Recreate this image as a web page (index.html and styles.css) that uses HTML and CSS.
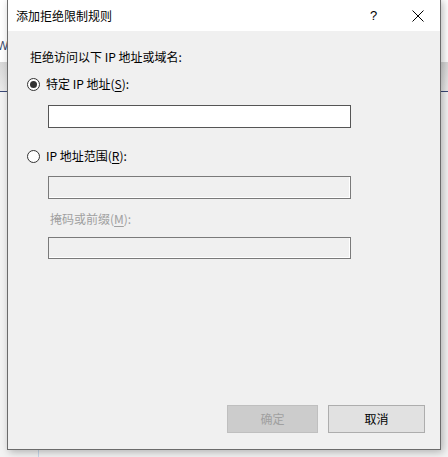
FILE: index.html
```html
<!DOCTYPE html>
<html lang="zh-CN">
<head>
<meta charset="utf-8">
<title>添加拒绝限制规则</title>
<link rel="stylesheet" href="styles.css">
</head>
<body>
<div class="desktop">
  <div class="bg-top"><span class="bg-w">W</span></div>
  <div class="bg-tab"></div>
  <div class="bg-line"></div>
  <div class="bg-rest"></div>
  <div class="bg-blue"></div>
</div>
<div class="dialog">
  <div class="titlebar">
    <span class="title">添加拒绝限制规则</span>
    <span class="help">?</span>
    <span class="close">
      <svg width="12" height="12" viewBox="0 0 12 12"><path d="M0.5 0.5 L11.5 11.5 M11.5 0.5 L0.5 11.5" stroke="#000" stroke-width="1" fill="none"/></svg>
    </span>
  </div>
  <div class="content">
    <div class="intro">拒绝访问以下 IP 地址或域名:</div>
    <div class="radio-row first">
      <span class="radio checked"></span>
      <span class="radio-label">特定 IP 地址(<u>S</u>):</span>
    </div>
    <div class="field"></div>
    <div class="radio-row second">
      <span class="radio"></span>
      <span class="radio-label">IP 地址范围(<u>R</u>):</span>
    </div>
    <div class="field disabled"></div>
    <div class="sublabel">掩码或前缀(<u>M</u>):</div>
    <div class="field disabled last"></div>
    <div class="buttons">
      <div class="btn btn-disabled">确定</div>
      <div class="btn btn-cancel">取消</div>
    </div>
  </div>
</div>
</body>
</html>
```

FILE: styles.css
```css
* { box-sizing: border-box; }
html, body {
  margin: 0;
  padding: 0;
}
body {
  width: 448px;
  height: 457px;
  overflow: hidden;
  position: relative;
  font-family: "Noto Sans CJK SC", "Noto Sans", sans-serif;
  font-size: 12px;
  background: #ffffff;
}
.desktop {
  width: 448px;
  height: 457px;
  display: flex;
  flex-direction: column;
  position: relative;
}
.bg-top {
  height: 62px;
  background: #ffffff;
  padding-top: 38px;
}
.bg-w {
  display: block;
  margin-left: -3px;
  font-family: "Liberation Sans", sans-serif;
  font-size: 12px;
  line-height: 16px;
  color: #3b4a6b;
}
.bg-tab {
  height: 29px;
  background: linear-gradient(#d8d8d8, #eaeaea);
}
.bg-line {
  height: 1px;
  background: #3c4a78;
}
.bg-rest {
  flex: 1;
  background: #f3f3f3;
}
.bg-blue {
  position: absolute;
  left: 38px;
  top: 450px;
  width: 1px;
  height: 7px;
  background: #c8d8ea;
}
.dialog {
  position: absolute;
  left: 7px;
  top: -1px;
  width: 434px;
  height: 451px;
  border: 1px solid #6b6b6b;
  background: #f0f0f0;
  box-shadow: 2px 2px 8px rgba(0, 0, 0, 0.28);
  display: flex;
  flex-direction: column;
}
.titlebar {
  height: 31px;
  background: #ffffff;
  display: flex;
  align-items: center;
  padding-left: 8px;
}
.title {
  flex: 1;
  line-height: 16px;
  color: #000;
}
.help {
  width: 8px;
  margin-right: 34px;
  font-family: "Liberation Sans", sans-serif;
  font-size: 13px;
  color: #000;
}
.close {
  width: 12px;
  height: 12px;
  margin-right: 16px;
  display: flex;
}
.content {
  flex: 1;
  display: flex;
  flex-direction: column;
  padding: 18px 15px 16px 19px;
}
.intro {
  line-height: 16px;
  margin-left: 3px;
  color: #000;
}
.radio-row {
  display: flex;
  align-items: center;
  height: 16px;
}
.radio-row.first { margin-top: 11px; }
.radio-row.second { margin-top: 20px; }
.radio {
  width: 13px;
  height: 13px;
  border: 1px solid #333333;
  border-radius: 50%;
  background: #ffffff;
  display: flex;
  align-items: center;
  justify-content: center;
}
.radio.checked::after {
  content: "";
  width: 7px;
  height: 7px;
  border-radius: 50%;
  background: #333333;
}
.radio-label {
  margin-left: 6px;
  line-height: 16px;
  color: #000;
}
u { text-decoration-thickness: 1px; text-underline-offset: 2px; }
.field {
  width: 303px;
  height: 23px;
  margin-left: 21px;
  margin-top: 13px;
  background: #ffffff;
  border: 1px solid #555555;
}
.field.disabled {
  background: #f0f0f0;
  border-color: #7a7a7a;
  box-shadow: inset -1px -1px 0 #ffffff;
  margin-top: 12px;
}
.sublabel {
  margin-top: 12px;
  margin-left: 23px;
  line-height: 16px;
  color: #a0a0a0;
}
.field.last {
  margin-top: 10px;
  height: 22px;
}
.buttons {
  margin-top: auto;
  display: flex;
  justify-content: flex-end;
  gap: 10px;
}
.btn {
  height: 28px;
  display: flex;
  align-items: center;
  justify-content: center;
  line-height: 16px;
}
.btn-disabled {
  width: 91px;
  background: #cccccc;
  border: 1px solid #bfbfbf;
  color: #a0a0a0;
}
.btn-cancel {
  width: 97px;
  background: #e1e1e1;
  border: 1px solid #adadad;
  color: #000;
}
```
